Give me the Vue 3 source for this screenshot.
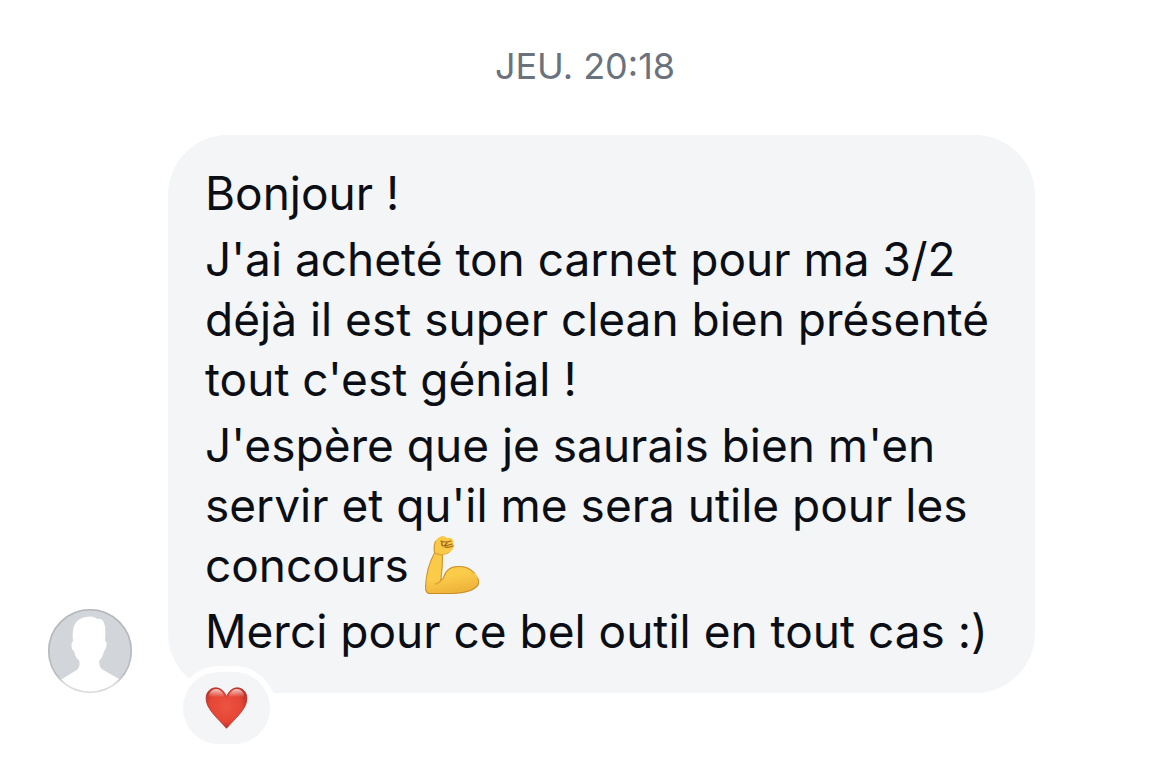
<script setup>
const before = [
  'Bonjour !',
  "J'ai acheté ton carnet pour ma 3/2 déjà il est super clean bien présenté tout c'est génial !",
]
const after = 'Merci pour ce bel outil en tout cas :)'
</script>

<template>
  <main class="chat">
    <time class="stamp">JEU. 20:18</time>
    <article class="message">
      <svg class="avatar" viewBox="0 0 84 84" role="img" aria-label="Photo de profil">
        <defs>
          <clipPath id="avatar-clip"><circle cx="42" cy="42" r="42" /></clipPath>
          <linearGradient id="rim" x1="0" y1="0" x2="0" y2="1">
            <stop offset="0" stop-color="#b3b6ba" />
            <stop offset="0.8" stop-color="#b9bcc0" />
            <stop offset="0.9" stop-color="#dcdde0" />
            <stop offset="1" stop-color="#d8dadd" />
          </linearGradient>
        </defs>
        <g clip-path="url(#avatar-clip)">
          <rect width="84" height="84" fill="#d2d5da" />
          <path
            fill="#fff"
            d="M0 84V78L14 70Q21 66 27 62Q31 60 31.500 56V52Q27 48 26 42Q23.500 41 23.500 36Q23.500 33 25 32Q24 23 26 17Q29 8 42 7.500Q47 7.500 49 10Q54 9 56 14Q58 18 57 32Q59 32 58.500 36Q58 41 56 42Q55 48 51 52L52 58Q53 60 57 62Q64 66 71 70L84 78V84Z"
          />
        </g>
        <circle cx="42" cy="42" r="41.200" fill="none" stroke="url(#rim)" stroke-width="1.600" />
      </svg>
      <div class="bubble">
        <p v-for="line in before" :key="line">{{ line }}</p>
        <p>
          J'espère que je saurais bien m'en servir et qu'il me sera utile pour les concours
          <svg class="arm" viewBox="0 0 58 58" role="img" aria-label="Biceps contracté">
            <defs>
              <linearGradient id="skin" x1="0" y1="0" x2="0.200" y2="1">
                <stop offset="0" stop-color="#f9c846" />
                <stop offset="0.750" stop-color="#fbcb4a" />
                <stop offset="1" stop-color="#efb63c" />
              </linearGradient>
              <clipPath id="arm-clip">
                <path d="M10 5Q13 1 17 0Q20 0 22 2Q26 1 28 4Q28 7 29 9Q29 13 25 16Q22 19 18 19Q18 31 16.500 43L18 42Q21 30 33 30Q43 29 50 37Q57 46 52 51Q46 57 28 58H4Q0 57 0 51Q1 31 9 17Q8 10 10 5Z" />
              </clipPath>
            </defs>
            <g clip-path="url(#arm-clip)">
              <rect width="58" height="58" fill="url(#skin)" />
              <path fill="none" stroke="#bb7c22" stroke-width="2" opacity=".75" d="M10 5Q8 10 9 17Q1 31 0 51Q0 57 4 58H28Q46 57 52 51Q56 47 53 42M18 19Q18 31 16.500 43L18 42Q21 30 33 30Q43 29 50 37" />
              <path fill="none" stroke="#d99a2e" stroke-width="1.500" opacity=".7" d="M17 43Q14 48 10 48M10 17Q14 19 18 19Q22 19 25 16" />
            </g>
            <path fill="none" stroke="#9c6319" stroke-width="1.200" stroke-linecap="round" stroke-linejoin="round" d="M16 5Q20 7 26 5M17 6Q16 9 18 10Q22 10 27 8M20 11Q23 12 28 10M22 7L20 9" />
          </svg>
        </p>
        <p>{{ after }}</p>
        <button class="reaction" type="button" aria-label="Réaction : cœur">
          <svg class="heart" viewBox="0 0 42 42" aria-hidden="true">
            <defs>
              <radialGradient id="red" cx="0.480" cy="0.450" r="0.600">
                <stop offset="0" stop-color="#ee5342" />
                <stop offset="0.650" stop-color="#e54535" />
                <stop offset="1" stop-color="#b9281e" />
              </radialGradient>
              <linearGradient id="shine" x1="0" y1="0" x2="0" y2="1">
                <stop offset="0" stop-color="#fff" stop-opacity="0.750" />
                <stop offset="1" stop-color="#fff" stop-opacity="0" />
              </linearGradient>
            </defs>
            <path fill="url(#red)" stroke="#ae3027" stroke-width=".8" d="M21 9.500Q17 .8 10.500 .8C5 .8 .6 5 .6 11.500C.6 22 12 31 21 41.300C30 31 41.400 22 41.400 11.500C41.400 5 37 .8 31.500 .8Q25 .8 21 9.500Z" />
            <path fill="url(#shine)" d="M3 10Q4 2 11 2Q16 2 19 10ZM23 10Q26 2 31 2Q38 2 39 10Z" />
          </svg>
        </button>
      </div>
    </article>
  </main>
</template>

<style>
body {
  margin: 0;
  background: #fff;
}
</style>

<style scoped>
.chat {
  padding: 44px 135px 74px 48px;
  font-family: Inter, "Liberation Sans", sans-serif;
  color: #0b0e14;
}
.stamp {
  display: block;
  margin: 0 -87px 47px 0;
  font-size: 36px;
  line-height: 44px;
  text-align: center;
  color: #6a737d;
}
.message {
  display: flex;
  align-items: flex-end;
  gap: 36px;
}
.avatar {
  flex: none;
  width: 84px;
  height: 84px;
}
.bubble {
  position: relative;
  flex: 1;
  min-width: 0;
  padding: 28px 37px 32px;
  border-radius: 60px;
  background: #f3f5f7;
  font-size: 46px;
  line-height: 60px;
}
.bubble p {
  margin: 0;
}
.bubble p + p {
  margin-top: 6px;
}
.arm {
  width: 58px;
  height: 58px;
  margin-left: 3px;
  vertical-align: -12px;
}
.reaction {
  position: absolute;
  left: 9px;
  bottom: -57px;
  display: flex;
  align-items: center;
  justify-content: center;
  padding: 15px 22px;
  border: 6px solid #fff;
  border-radius: 42px;
  background: #f3f5f7;
}
.heart {
  width: 43px;
  height: 42px;
}
</style>
